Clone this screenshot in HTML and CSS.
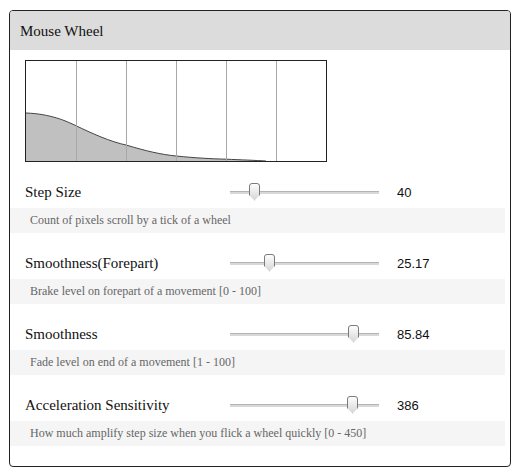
FILE: index.html
```html
<!DOCTYPE html>
<html lang="en">

<head>
  <meta charset="UTF-8" />
  <title>Mouse Wheel</title>
  <link rel="stylesheet" href="styles.css">
</head>

<body>
  <div class="panel">
    <div class="panel-head">Mouse Wheel</div>
    <!-- scroll curve preview -->
    <div class="chart">
      <svg width="300" height="100" viewBox="0 0 300 100">
        <path d="M0 52 C25 53 40 60 50 64.7 C65 72 85 81 100 84 C120 90 135 93.5 150 95 C170 97 185 97.8 200 98.2 C215 98.8 230 99.4 240 100 L0 100 Z" fill="#c0c0c0" stroke="none" />
        <path d="M0 52 C25 53 40 60 50 64.7 C65 72 85 81 100 84 C120 90 135 93.5 150 95 C170 97 185 97.8 200 98.2 C215 98.8 230 99.4 240 100" fill="none" stroke="#444" stroke-width="1" />
        <g stroke="#a8a8a8" stroke-width="1">
          <line x1="50.5" y1="0" x2="50.5" y2="100" />
          <line x1="100.5" y1="0" x2="100.5" y2="100" />
          <line x1="150.5" y1="0" x2="150.5" y2="100" />
          <line x1="200.5" y1="0" x2="200.5" y2="100" />
          <line x1="250.5" y1="0" x2="250.5" y2="100" />
        </g>
      </svg>
    </div>

    <div class="setting">
      <div class="row">
        <span class="label">Step Size</span>
        <div class="slider"><span class="thumb" style="left: 19px"></span></div>
        <span class="value">40</span>
      </div>
      <div class="desc">Count of pixels scroll by a tick of a wheel</div>
    </div>

    <div class="setting">
      <div class="row">
        <span class="label">Smoothness(Forepart)</span>
        <div class="slider"><span class="thumb" style="left: 34px"></span></div>
        <span class="value">25.17</span>
      </div>
      <div class="desc">Brake level on forepart of a movement [0 - 100]</div>
    </div>

    <div class="setting">
      <div class="row">
        <span class="label">Smoothness</span>
        <div class="slider"><span class="thumb" style="left: 118px"></span></div>
        <span class="value">85.84</span>
      </div>
      <div class="desc">Fade level on end of a movement [1 - 100]</div>
    </div>

    <div class="setting">
      <div class="row">
        <span class="label">Acceleration Sensitivity</span>
        <div class="slider"><span class="thumb" style="left: 117px"></span></div>
        <span class="value">386</span>
      </div>
      <div class="desc">How much amplify step size when you flick a wheel quickly [0 - 450]</div>
    </div>
  </div>
</body>

</html>
```

FILE: styles.css
```css
* {
  margin: 0;
  padding: 0;
  box-sizing: border-box;
}

body {
  background: #fff;
  padding: 10px 0 0 9px;
  font-family: "Liberation Serif", "Times New Roman", Times, Tinos, "Noto Serif", "DejaVu Serif", FreeSerif, Georgia, serif;
  color: #111;
}

.panel {
  width: 502px;
  border: 1px solid #222;
  border-radius: 4px;
  overflow: hidden;
  padding-bottom: 20px;
}

.panel-head {
  height: 39px;
  line-height: 40px;
  padding-left: 10px;
  background: #dcdcdc;
  font-size: 15px;
}

.chart {
  width: 302px;
  height: 102px;
  margin: 10px 0 0 15px;
  border: 1px solid #222;
}

.chart svg {
  display: block;
}

.setting {
  margin-top: 14px;
}

.row {
  display: flex;
  align-items: center;
  height: 32px;
  padding-left: 15px;
}

.label {
  width: 205px;
  font-size: 15px;
}

.slider {
  position: relative;
  width: 149px;
  height: 3px;
  background: #d8d8d8;
  border-top: 1px solid #b4b4b4;
}

.thumb {
  position: absolute;
  top: -9px;
  width: 11px;
  height: 18px;
  background: linear-gradient(#fdfdfd, #d6d6d6);
  border: 1px solid #7a7a7a;
  border-radius: 3px 3px 0 0;
  clip-path: polygon(0 0, 100% 0, 100% 70%, 50% 100%, 0 70%);
}

.value {
  margin-left: 18px;
  font: 13px "Liberation Sans", Arial, sans-serif;
}

.desc {
  height: 25px;
  line-height: 25px;
  margin-right: 5px;
  padding-left: 20px;
  background: #f5f5f5;
  color: #666;
  font-size: 12px;
}
```
